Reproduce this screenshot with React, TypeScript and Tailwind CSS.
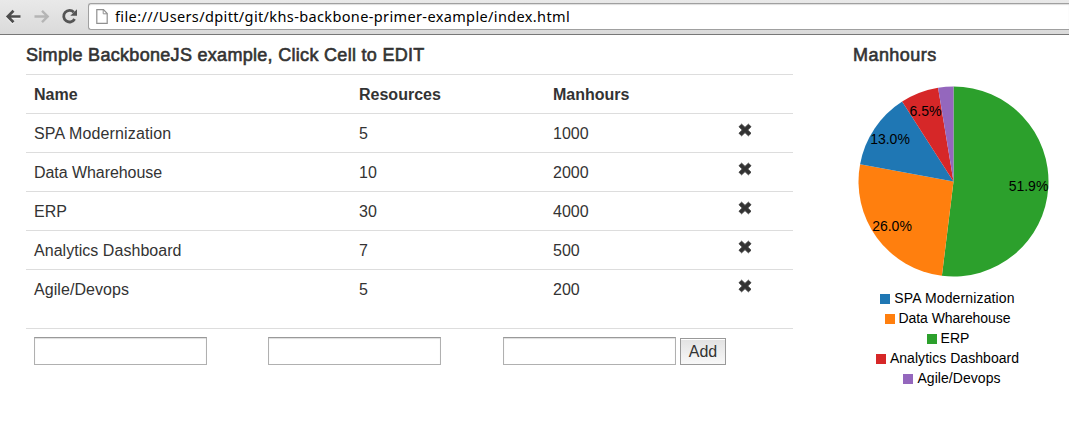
const rows = [
  { name: "SPA Modernization", resources: 5, manhours: 1000, color: "#1f77b4", text: "tracking-[0.14px]", legend: "" },
  { name: "Data Wharehouse", resources: 10, manhours: 2000, color: "#ff7f0e", text: "tracking-[-0.06px]", legend: "" },
  { name: "ERP", resources: 30, manhours: 4000, color: "#2ca02c", text: "tracking-normal", legend: "pl-px" },
  { name: "Analytics Dashboard", resources: 7, manhours: 500, color: "#d62728", text: "tracking-[0.04px]", legend: "" },
  { name: "Agile/Devops", resources: 5, manhours: 200, color: "#9467bd", text: "tracking-[0.06px]", legend: "pl-[9px]" },
];

function Toolbar() {
  return (
    <header className="flex h-[35px] border-b border-[#777] bg-linear-to-b from-[#e9e9e9] to-[#dadada]">
      <div className="flex w-[88px] shrink-0 pt-[7px] pl-[5px]">
        <svg width="80" height="20" viewBox="5 7 80 20" fill="none">
          <g stroke="#fff" strokeWidth="2.6" opacity=".7" transform="translate(0 1)">
            <path d="M20.5 16.5H8M13.5 10.5l-6 6 6 6" />
          </g>
          <path d="M20.5 16.5H8M13.5 10.8l-5.7 5.7 5.7 5.7" stroke="#4d4d4d" strokeWidth="2.7" />
          <path d="M34.5 16.5H47M42 10.8l5.7 5.7-5.7 5.7" stroke="#b5b5b5" strokeWidth="2.4" />
          <path d="M73.8 12.3A5.8 5.8 0 1 0 74.6 19" stroke="#555" strokeWidth="2.8" />
          <path d="M77 9.3v6.5h-6.7z" fill="#555" />
        </svg>
      </div>
      <div className="mt-[3px] flex h-[27px] flex-1 rounded-l-[3px] border border-r-0 border-[#a0a0a0] bg-white pt-px pl-[7px] shadow-[inset_0_1px_1px_#ddd]">
        <svg className="mt-[4px] shrink-0" width="12" height="16" viewBox="0 0 12 16">
          <path d="M.8.7h6.7l3.7 3.8v9.8H.8z" fill="#fff" stroke="#909090" strokeWidth="1.2" />
          <path d="M7.2.8v4h4" fill="none" stroke="#909090" />
        </svg>
        <span className="ml-[7px] font-['Noto_Sans',sans-serif] text-[14.5px] leading-[23px] tracking-[0.37px] whitespace-nowrap text-black">
          file:///Users/dpitt/git/khs-backbone-primer-example/index.html
        </span>
      </div>
    </header>
  );
}

function RemoveIcon() {
  return (
    <svg width="14" height="14" viewBox="0 0 14 14">
      <path
        d="M3.6 1.2 7 4.4l3.4-3.2 2.6 2.5L9.7 7l3.3 3.3-2.6 2.5L7 9.6l-3.4 3.2L1 10.3 4.3 7 1 3.7z"
        fill="#333"
        stroke="#333"
        strokeWidth=".9"
        strokeLinejoin="round"
      />
    </svg>
  );
}

function PieChart() {
  const total = rows.reduce((sum, row) => sum + row.manhours, 0);
  const sorted = [...rows].sort((a, b) => b.manhours - a.manhours);
  const radius = 95;
  let angle = 0;
  const slices = sorted.map((row) => {
    const start = angle;
    const sweep = (row.manhours / total) * Math.PI * 2;
    angle += sweep;
    const point = (a: number) => `${radius * Math.sin(a)} ${-radius * Math.cos(a)}`;
    return {
      ...row,
      path: `M0 0L${point(start)}A${radius} ${radius} 0 ${sweep > Math.PI ? 1 : 0} 1 ${point(angle)}Z`,
    };
  });
  const labels = [
    { text: "51.9%", x: 75, y: 9.5 },
    { text: "26.0%", x: -61.5, y: 49.5 },
    { text: "13.0%", x: -63.5, y: -37.5 },
    { text: "6.5%", x: -28, y: -65.5 },
  ];
  return (
    <svg className="mt-[18px] ml-[5px] overflow-visible" width="190" height="192" viewBox="-95.5 -95.5 190 192">
      {slices.map((slice) => (
        <path key={slice.name} d={slice.path} fill={slice.color} />
      ))}
      {labels.map((label) => (
        <text key={label.text} x={label.x} y={label.y} textAnchor="middle" className="text-[14px]">
          {label.text}
        </text>
      ))}
    </svg>
  );
}

const heading = "text-[18px] leading-[20px] whitespace-nowrap [-webkit-text-stroke:0.6px_#333]";
const field = "block h-7 w-[173px] border border-[#b0b0b0] border-t-[#999] bg-white shadow-[inset_0_1px_1px_#ddd] outline-none";

export default function App() {
  return (
    <div className="h-[426px] overflow-hidden bg-white font-['Liberation_Sans',sans-serif] text-[16px] text-[#333]">
      <Toolbar />
      <main className="flex pt-[10px] pl-[26px]">
        <section className="w-[767px]">
          <h1 className={`${heading} tracking-[0.3px]`}>Simple BackboneJS example, Click Cell to EDIT</h1>
          <div className="mt-[9px] grid h-[39px] grid-cols-[325px_194px_185px_1fr] border-t border-[#ddd] pl-2 leading-[40px] font-bold">
            <span>Name</span>
            <span>Resources</span>
            <span>Manhours</span>
          </div>
          {rows.map((row) => (
            <div key={row.name} className="grid h-[39px] grid-cols-[325px_194px_185px_1fr] border-t border-[#ddd] pl-2 leading-[40px]">
              <span className={row.text}>{row.name}</span>
              <span>{row.resources}</span>
              <span>{row.manhours}</span>
              <button className="mt-[9px] h-[14px] w-[14px]" aria-label="Remove">
                <RemoveIcon />
              </button>
            </div>
          ))}
          <div className="mt-5 flex border-t border-[#ddd] pt-2 pl-2">
            <input className={field} />
            <input className={`${field} ml-[61px]`} />
            <input className={`${field} ml-[62px]`} />
            <button className="mt-px ml-1 h-[27px] w-[46px] border border-[#999] bg-linear-to-b from-[#e2e2e2] to-[#f8f8f8] leading-[25px] shadow-[inset_0_1px_0_#fff]">
              Add
            </button>
          </div>
        </section>
        <aside className="ml-[60px] w-[200px]">
          <h2 className={`${heading} tracking-[0.45px]`}>Manhours</h2>
          <div className="h-[3px]" />
          <PieChart />
          <ul className="mt-[10px] w-[189px] text-[14px] leading-5 text-black">
            {rows.map((row) => (
              <li key={row.name} className={`flex items-center justify-center gap-1 ${row.legend}`}>
                <svg className="mt-px" width="10" height="10">
                  <rect width="10" height="10" fill={row.color} />
                </svg>
                <span className={row.text}>{row.name}</span>
              </li>
            ))}
          </ul>
        </aside>
      </main>
    </div>
  );
}
